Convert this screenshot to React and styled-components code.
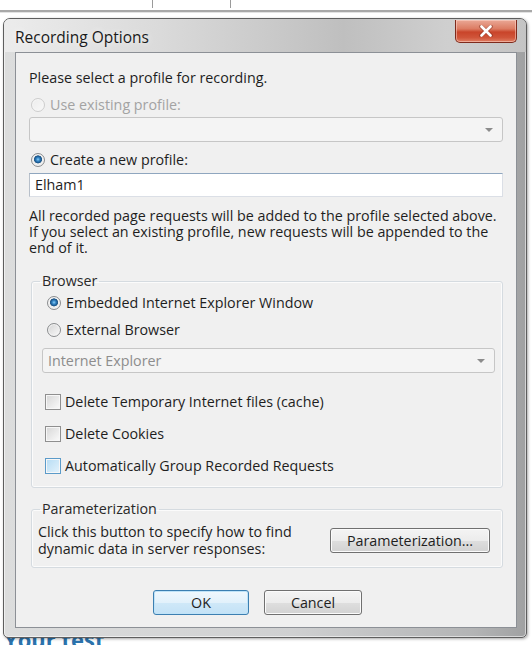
import React from 'react'
import styled, { createGlobalStyle } from 'styled-components'

const GlobalStyle = createGlobalStyle`
html, body {
  margin:0;
  background:#ffffff;
}
body {
  font-family:"Open Sans", "Noto Sans", sans-serif;
  color:#1e1e1e;
}
`;

const Desktop = styled.div`
position:relative;
width:532px;
height:645px;
overflow:hidden;
background:#ffffff;
`;

const PageStrip = styled.div`
height:10px;
display:flex;
gap:77px;
padding-left:152px;
border-bottom:2px solid #a8a8a8;
box-shadow:0 1px 0 #e2e2e2;
`;

const Tick = styled.span`
width:1px;
height:8px;
background:#9a9a9a;
`;

const PageHeading = styled.h2`
margin:614px 0 0 4px;
font-family:"Open Sans", sans-serif;
font-size:22px;
line-height:26px;
font-weight:700;
color:#2b73ad;
`;

const Window = styled.div`
position:absolute;
left:3px;
top:18px;
width:524px;
height:620px;
box-sizing:border-box;
display:flex;
flex-direction:column;
padding:0 9px 9px 11px;
border:1px solid #5e5e5e;
border-radius:7px 7px 5px 5px;
background:linear-gradient(to right, #dcdddd 0%, #cfd0d1 55%, #b3b4b5 90%, #a0a1a2 100%);
box-shadow:inset 0 0 0 1px rgba(255,255,255,0.55), 1px 1px 3px rgba(0,0,0,0.35);
`;

const TitleBar = styled.div`
height:33px;
display:flex;
align-items:flex-start;
justify-content:space-between;
margin:0 -9px 0 -11px;
padding:0 9px 0 11px;
border-radius:6px 6px 0 0;
background:linear-gradient(to right, #ececec 0%, #dadada 30%, #bfbfbf 65%, #cfcfcf 85%, #c4c4c4 100%);
`;

const Title = styled.span`
margin-top:7px;
font-size:15.5px;
color:#1a1a1a;
text-shadow:0 0 6px rgba(255,255,255,0.9);
`;

const CloseButton = styled.button`
width:62px;
height:23px;
margin-top:1px;
display:flex;
align-items:center;
justify-content:center;
border:1px solid #7e2a1c;
border-top:none;
border-radius:0 0 5px 5px;
background:linear-gradient(to bottom, #eaa896 0%, #dc7c63 40%, #c9442a 55%, #d0553a 80%, #e07f63 100%);
box-shadow:inset 0 0 0 1px rgba(255,220,210,0.5);
padding:0;
`;

const Client = styled.div`
flex:1;
display:flex;
flex-direction:column;
padding:0 13px 0 13px;
border:1px solid #8c9096;
background:#f0f0f0;
font-size:14.3px;
line-height:16px;
`;

const Text = styled.div`
margin-top:${p => p.$top || 0}px;
color:${p => (p.$disabled ? '#a3a3a3' : '#1e1e1e')};
white-space:nowrap;
`;

const Row = styled.label`
display:flex;
align-items:center;
gap:${p => p.$gap ?? 5}px;
height:18px;
margin-top:${p => p.$top || 0}px;
padding-left:${p => p.$indent || 0}px;
color:${p => (p.$disabled ? '#a3a3a3' : '#1e1e1e')};
`;

const Radio = styled.span`
width:14px;
height:14px;
box-sizing:border-box;
flex:none;
border-radius:50%;
border:1px solid ${p => (p.$disabled ? '#cdcdcd' : '#8a8c8e')};
background:${p =>
  p.$checked
    ? 'radial-gradient(circle at 50% 45%, #8fd0f4 0, #3a8ccc 1.6px, #1b5a92 3.2px, #2c5f8a 3.8px, #f2f2f2 4.3px, #e2e2e2 6px)'
    : p.$disabled
    ? 'linear-gradient(135deg, #ececec, #f8f8f8)'
    : 'linear-gradient(135deg, #d4d4d4, #f9f9f9)'};
box-shadow:inset 0 0 0 1px ${p => (p.$disabled ? '#f6f6f6' : '#f4f4f4')};
`;

const Checkbox = styled.span`
width:16px;
height:16px;
box-sizing:border-box;
flex:none;
border:1px solid ${p => (p.$hot ? '#5b9bc9' : '#8f8f8f')};
background:${p =>
  p.$hot
    ? 'linear-gradient(135deg, #b6dcf4, #e4f3fc)'
    : 'linear-gradient(135deg, #d6d6d6, #fbfbfb)'};
box-shadow:inset 0 0 0 1px #f7f7f7;
`;

const Combo = styled.div`
height:25px;
box-sizing:border-box;
display:flex;
align-items:center;
justify-content:space-between;
margin-top:${p => p.$top || 0}px;
padding:0 9px 0 5px;
border:1px solid #c6c6c6;
border-radius:3px;
background:#f4f4f4;
color:#8d8d8d;
`;

const ComboArrow = styled.span`
width:0;
height:0;
border-left:4px solid transparent;
border-right:4px solid transparent;
border-top:4px solid #8c8c8c;
`;

const TextInput = styled.div`
height:24px;
box-sizing:border-box;
display:flex;
align-items:center;
margin-top:4px;
padding-left:5px;
border:1px solid #dbdfe6;
border-top-color:#8fa6bf;
border-left-color:#b8c0ca;
background:#ffffff;
color:#1e1e1e;
`;

const Group = styled.fieldset`
margin:${p => p.$top || 0}px 0 0 2px;
padding:0;
border:1px solid #d5dbe0;
border-radius:3px;
box-shadow:inset 0 0 0 1px #fbfbfb;
min-width:0;
`;

const Legend = styled.legend`
margin-left:8px;
padding:0 2px;
font-size:14.3px;
line-height:16px;
color:#2a2a2a;
`;

const GroupBody = styled.div`
display:flex;
flex-direction:column;
padding:${p => p.$pad};
`;

const ParamRow = styled.div`
display:flex;
align-items:center;
justify-content:space-between;
margin-top:6px;
`;

const ParamText = styled.div`
line-height:17px;
`;

const PushButton = styled.button`
width:${p => p.$w}px;
height:25px;
box-sizing:border-box;
padding:0;
font-family:"Open Sans", "Noto Sans", sans-serif;
font-size:14.3px;
color:#1e1e1e;
border:1px solid ${p => (p.$default ? '#3c7fb1' : '#707070')};
border-radius:3px;
background:${p =>
  p.$default
    ? 'linear-gradient(to bottom, #f0f8fd 0%, #e2f1fb 50%, #cfe8f8 52%, #c3e2f6 100%)'
    : 'linear-gradient(to bottom, #f4f4f4 0%, #ececec 50%, #dedede 52%, #d2d2d2 100%)'};
box-shadow:inset 0 0 0 1px ${p => (p.$default ? '#bfe3f8' : '#fbfbfb')};
`;

const ButtonBar = styled.div`
display:flex;
gap:15px;
margin-top:22px;
padding-left:124px;
`;

function CloseGlyph() {
  return (
    <svg width="16" height="12" viewBox="0 0 16 12">
      <path d="M3 1.5 L13 10.5 M13 1.5 L3 10.5" stroke="#7a2a1a" strokeWidth="4" strokeLinecap="round" opacity="0.45" />
      <path d="M3.5 1.5 L12.5 10.5 M12.5 1.5 L3.5 10.5" stroke="#ffffff" strokeWidth="2.6" strokeLinecap="round" />
    </svg>
  );
}

export default function App() {
  return (
    <Desktop>
      <GlobalStyle />
      <PageStrip>
        <Tick />
        <Tick />
      </PageStrip>
      <PageHeading>Your test</PageHeading>

      <Window>
        <TitleBar>
          <Title>Recording Options</Title>
          <CloseButton><CloseGlyph /></CloseButton>
        </TitleBar>

        <Client>
          <Text $top={17}>Please select a profile for recording.</Text>

          <Row $top={10} $indent={2} $disabled>
            <Radio $disabled />
            Use existing profile:
          </Row>
          <Combo $top={3}>
            <span />
            <ComboArrow />
          </Combo>

          <Row $top={9} $indent={2}>
            <Radio $checked />
            Create a new profile:
          </Row>
          <TextInput>Elham1</TextInput>

          <Text $top={11}>
            All recorded page requests will be added to the profile selected above.<br />
            If you select an existing profile, new requests will be appended to the<br />
            end of it.
          </Text>

          <Group $top={17}>
            <Legend>Browser</Legend>
            <GroupBody $pad="5px 7px 12px 10px">
              <Row $indent={5}>
                <Radio $checked />
                Embedded Internet Explorer Window
              </Row>
              <Row $top={9} $indent={5}>
                <Radio />
                External Browser
              </Row>
              <Combo $top={9}>
                Internet Explorer
                <ComboArrow />
              </Combo>
              <Row $top={20} $indent={3} $gap={4}>
                <Checkbox />
                Delete Temporary Internet files (cache)
              </Row>
              <Row $top={14} $indent={3} $gap={4}>
                <Checkbox />
                Delete Cookies
              </Row>
              <Row $top={14} $indent={3} $gap={4}>
                <Checkbox $hot />
                Automatically Group Recorded Requests
              </Row>
            </GroupBody>
          </Group>

          <Group $top={13}>
            <Legend>Parameterization</Legend>
            <GroupBody $pad="0 12px 10px 6px">
              <ParamRow>
                <ParamText>
                  Click this button to specify how to find<br />
                  dynamic data in server responses:
                </ParamText>
                <PushButton $w={160}>Parameterization...</PushButton>
              </ParamRow>
            </GroupBody>
          </Group>

          <ButtonBar>
            <PushButton $w={96} $default>OK</PushButton>
            <PushButton $w={98}>Cancel</PushButton>
          </ButtonBar>
        </Client>
      </Window>
    </Desktop>
  );
}
